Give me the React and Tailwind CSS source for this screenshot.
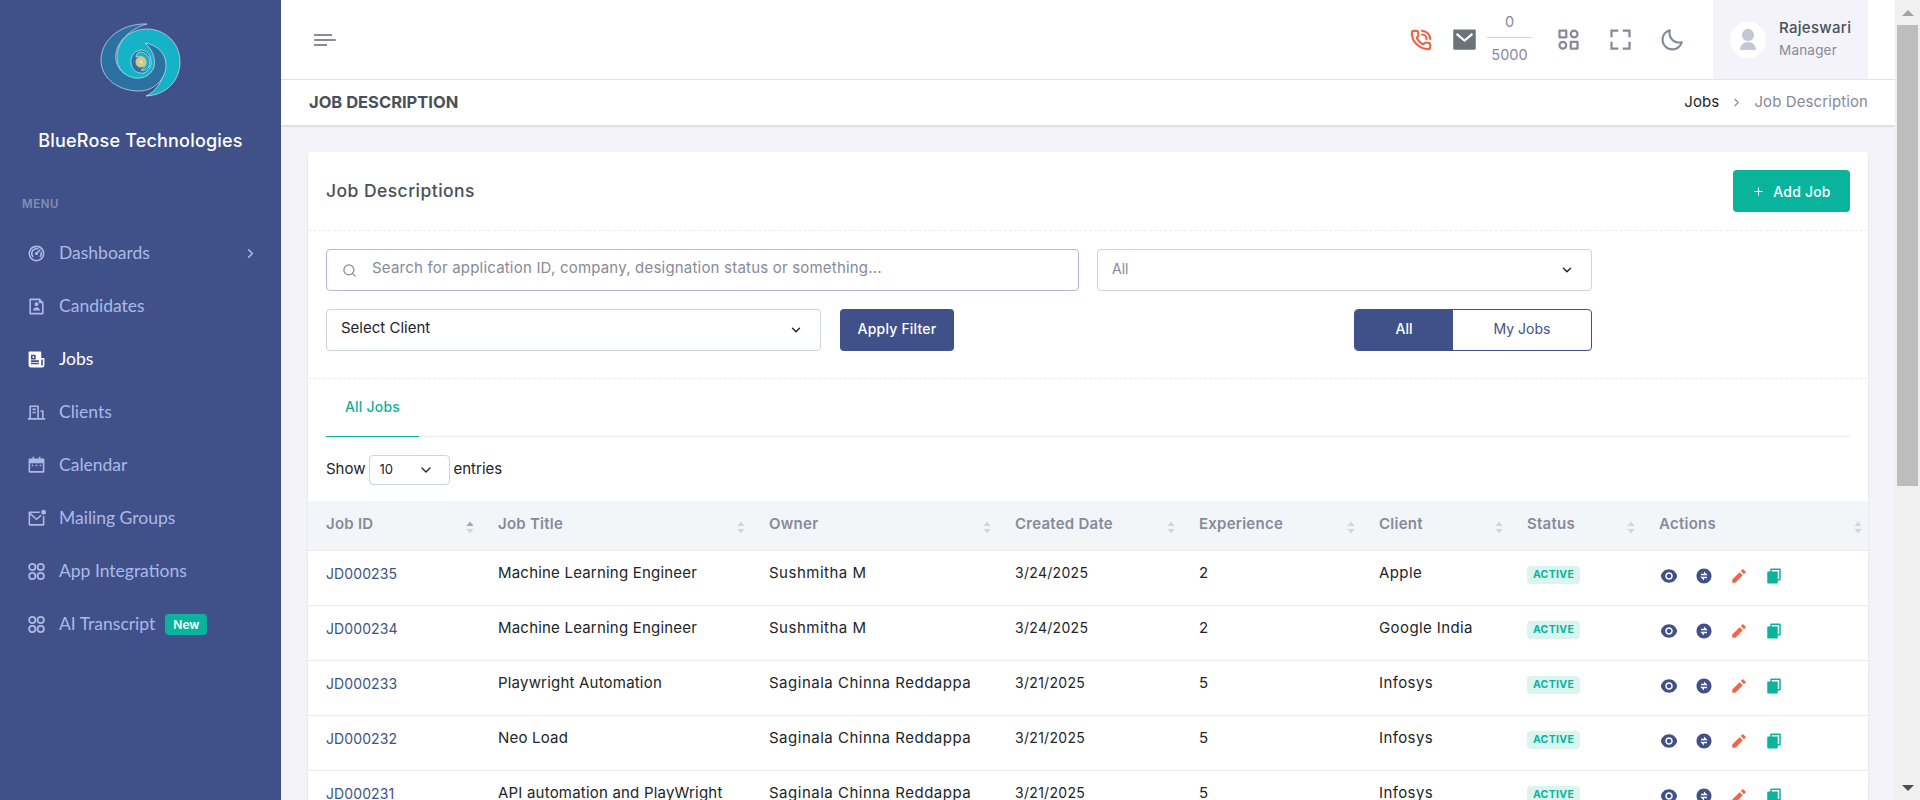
import React from "react";
import { ChevronDown, ChevronRight, Plus, Search, PhoneCall } from "lucide-react";
import {
  RiDashboard2Line,
  RiFileUserLine,
  RiNewspaperFill,
  RiBuildingLine,
  RiCalendar2Fill,
  RiMailUnreadLine,
  RiEyeFill,
  RiExchangeFill,
  RiPencilFill,
  RiFileCopyFill,
  RiMailFill,
  RiUserFill,
} from "react-icons/ri";
import { BiCategoryAlt, BiFullscreen, BiMoon } from "react-icons/bi";

const Circles = ({ className }) => (
  <svg viewBox="0 0 18 18" className={className} fill="none" stroke="currentColor" strokeWidth="1.7">
    <circle cx="5" cy="4.7" r="3" />
    <circle cx="13" cy="4.7" r="3" />
    <circle cx="5" cy="13.3" r="3" />
    <circle cx="13" cy="13.3" r="3" />
  </svg>
);

const navItems = [
  { label: "Dashboards", icon: RiDashboard2Line, chevron: true },
  { label: "Candidates", icon: RiFileUserLine },
  { label: "Jobs", icon: RiNewspaperFill, active: true },
  { label: "Clients", icon: RiBuildingLine },
  { label: "Calendar", icon: RiCalendar2Fill },
  { label: "Mailing Groups", icon: RiMailUnreadLine },
  { label: "App Integrations", icon: Circles },
  { label: "AI Transcript", icon: Circles, badge: "New" },
];

const columns = [
  { label: "Job ID", width: "w-[172px]", active: true },
  { label: "Job Title", width: "w-[271px]" },
  { label: "Owner", width: "w-[246px]" },
  { label: "Created Date", width: "w-[184px]" },
  { label: "Experience", width: "w-[180px]" },
  { label: "Client", width: "w-[148px]" },
  { label: "Status", width: "w-[132px]" },
  { label: "Actions", width: "w-[227px]" },
];

const rows = [
  ["JD000235", "Machine Learning Engineer", "Sushmitha M", "3/24/2025", "2", "Apple"],
  ["JD000234", "Machine Learning Engineer", "Sushmitha M", "3/24/2025", "2", "Google India"],
  ["JD000233", "Playwright Automation", "Saginala Chinna Reddappa", "3/21/2025", "5", "Infosys"],
  ["JD000232", "Neo Load", "Saginala Chinna Reddappa", "3/21/2025", "5", "Infosys"],
  ["JD000231", "API automation and PlayWright", "Saginala Chinna Reddappa", "3/21/2025", "5", "Infosys"],
];

const Logo = () => (
  <svg viewBox="18 12 84 76" className="w-[84px] h-[76px]">
    <g stroke="#d5e3ee" strokeWidth="0.7">
      {/* teal outer ring with its bottom tail */}
      <path
        d="M65 86 C86 85 99 70 99 52 C99 32 83 19 66 19 C48 19 36 32 36 47 C36 60 47 71 62 71 C70 71 78 66 84 58 C82 72 74 82 65 86 Z"
        fill="#14b3c8"
      />
      {/* dark band, from the top tip round the left and up the right */}
      <path
        d="M66 14 C40 13 20 30 20 50 C20 69 38 81 58 81 C73 81 85 69 85 55 C85 44 77 35 64 33 C71 39 75 48 73 57 C70 65 63 69 54 68 C42 66 33 56 35 43 C37 30 51 18 66 14 Z"
        fill="#2b71a2"
      />
      {/* inner swirl */}
      <path
        d="M61 40 C54 40 49 46 50 53 C51 60 56 64 63 63 C68 61 71 56 70 50 C69 44 66 41 61 40 Z"
        fill="#2b71a2"
      />
      <path
        d="M60 42 C67 43 71 50 68 57 C66 60 63 61 60 60 C65 58 66 52 63 48 C61 46 58 46 55 47 C55 44 57 42 60 42 Z"
        fill="#14b3c8"
      />
    </g>
    <circle cx="60" cy="52" r="5.5" fill="#d3ca88" />
    <circle cx="60" cy="52" r="1.6" fill="#e6e0b4" />
  </svg>
);

const SortIcon = ({ active }) => (
  <svg viewBox="0 0 8 13" className="w-[8px] h-[13px] mt-[8px] shrink-0">
    <path d="M4 0.5 L7.5 5 L0.5 5 Z" fill={active ? "#a3a6b4" : "#d3d5dc"} />
    <path d="M0.5 8 L7.5 8 L4 12.5 Z" fill="#d3d5dc" />
  </svg>
);

const Sidebar = () => (
  <aside className="w-[281px] shrink-0 h-full bg-[#405189] flex flex-col">
    {/* Logo */}
    <div className="flex flex-col items-center pt-[22px]">
      <Logo />
      <div className="mt-[29px] text-[18px] leading-[27px] font-medium text-white tracking-[0.2px]">
        BlueRose Technologies
      </div>
    </div>
    <div className="mt-[42px] pl-[22px] text-[11.5px] leading-4 font-semibold tracking-[0.6px] text-[#838fb9]">
      MENU
    </div>
    {/* Navigation */}
    <nav className="mt-[15px]">
      {navItems.map((item) => {
        const Icon = item.icon;
        return (
          <div
            key={item.label}
            className={
              "flex items-center h-[53px] pl-[27px] pr-[23px] font-['Lato'] text-[17.5px] " +
              (item.active ? "text-white" : "text-[#abb9e8]")
            }
          >
            <Icon className="w-[19px] h-[19px] shrink-0" />
            <span className="ml-[13px] pb-[1px]">{item.label}</span>
            {item.badge && (
              <span className="ml-[10px] h-[21px] px-[8px] flex items-center rounded-[4px] bg-[#0ab39c] text-white font-['Inter'] text-[12px] font-semibold">
                {item.badge}
              </span>
            )}
            {item.chevron && <ChevronRight className="ml-auto w-[15px] h-[15px]" strokeWidth={2.5} />}
          </div>
        );
      })}
    </nav>
  </aside>
);

const Header = () => (
  <header className="h-[80px] shrink-0 bg-white border-b border-[#e9ebec] flex items-center pl-[33px] pr-[27px]">
    <div className="flex flex-col gap-[3px] w-[23px]">
      <span className="h-[2px] w-[18px] bg-[#878a99]" />
      <span className="h-[2px] w-[22px] bg-[#878a99] rounded" />
      <span className="h-[2px] w-[13px] bg-[#878a99]" />
    </div>
    <div className="ml-auto flex items-center h-full">
      <PhoneCall className="w-[22px] h-[22px] text-[#f06548]" strokeWidth={2.4} />
      <RiMailFill className="ml-[19px] w-[27px] h-[27px] text-[#6b737b]" />
      <div className="ml-[9px] w-[45px] flex flex-col items-center text-[#878a99] text-[14.5px]">
        <span className="leading-[20px] h-[25px]">0</span>
        <span className="w-full h-px bg-[#ced4da]" />
        <span className="leading-[34px] h-[30px]">5000</span>
      </div>
      <BiCategoryAlt className="ml-[23px] w-[27px] h-[27px] text-[#878a99]" />
      <BiFullscreen className="ml-[25px] w-[27px] h-[27px] text-[#878a99]" />
      <BiMoon className="ml-[25px] w-[26px] h-[26px] text-[#878a99]" />
      <div className="ml-[28px] w-[155px] h-full bg-[#f3f3f9] flex items-center pl-[17px]">
        <div className="w-[36px] h-[36px] rounded-full bg-white flex items-center justify-center">
          <RiUserFill className="w-[24px] h-[24px] text-[#c5c6d6]" />
        </div>
        <div className="ml-[13px] pb-[2px]">
          <div className="text-[15px] tracking-[0.3px] leading-[21px] font-medium text-[#495057]">Rajeswari</div>
          <div className="text-[13.5px] tracking-[0.2px] leading-[20px] mt-[2px] text-[#878a99]">Manager</div>
        </div>
      </div>
    </div>
  </header>
);

const Breadcrumb = () => (
  <div className="h-[45px] shrink-0 bg-white shadow-[0_1px_3px_rgba(56,65,74,0.2)] flex items-center justify-between pl-[28px] pr-[27px]">
    <h1 className="text-[16.5px] font-bold text-[#495057]">JOB DESCRIPTION</h1>
    <div className="flex items-center text-[15px] tracking-[0.1px]">
      <span className="text-[#212529]">Jobs</span>
      <ChevronRight className="w-[13px] h-[13px] mx-[11px] text-[#878a99]" />
      <span className="text-[#878a99]">Job Description</span>
    </div>
  </div>
);

const Filters = () => (
  <div className="px-[18px] pt-[18px] pb-[27px] border-b border-dashed border-[#e9ebec]">
    <div className="w-[1266px] flex flex-col gap-[18px]">
      <div className="flex gap-[18px]">
        <div className="w-[753px] h-[42px] rounded-[4px] border border-[#b1b9d6] flex items-center pl-[15px]">
          <Search className="w-[15px] h-[15px] text-[#878a99]" />
          <span className="ml-[15px] pb-[3px] text-[15px] tracking-[0.2px] text-[#878a99]">
            Search for application ID, company, designation status or something...
          </span>
        </div>
        <div className="flex-1 h-[42px] rounded-[4px] border border-[#ced4da] flex items-center justify-between pl-[14px] pr-[17px]">
          <span className="pb-[3px] text-[14px] text-[#878a99]">All</span>
          <ChevronDown className="w-[14px] h-[14px] text-[#212529]" strokeWidth={2.5} />
        </div>
      </div>
      <div className="flex items-center">
        <div className="w-[495px] h-[42px] rounded-[4px] border border-[#ced4da] flex items-center justify-between pl-[14px] pr-[17px]">
          <span className="pb-[3px] text-[15px] text-[#212529]">Select Client</span>
          <ChevronDown className="w-[14px] h-[14px] text-[#212529]" strokeWidth={2.5} />
        </div>
        <button className="ml-[19px] w-[114px] h-[42px] pb-[3px] rounded-[4px] bg-[#405189] text-white text-[14px] tracking-[0.2px] font-medium">
          Apply Filter
        </button>
        <div className="ml-auto w-[238px] h-[42px] rounded-[4px] border border-[#405189] flex overflow-hidden">
          <button className="w-[98px] pb-[3px] bg-[#405189] text-white text-[14px] font-medium">All</button>
          <button className="flex-1 pb-[3px] text-[#405189] text-[14px]">My Jobs</button>
        </div>
      </div>
    </div>
  </div>
);

const JobsTable = () => (
  <table className="w-full table-fixed border-collapse text-[15px] tracking-[0.5px]">
    <thead>
      <tr className="h-[49px] bg-[#f3f6f9] border-b border-[#e9ebec]">
        {columns.map((col) => (
          <th
            key={col.label}
            className={col.width + " pl-[18px] pr-[6px] pb-[3px] text-left font-semibold tracking-[0.25px] text-[#878a99]"}
          >
            <div className="flex items-center justify-between">
              <span>{col.label}</span>
              <SortIcon active={col.active} />
            </div>
          </th>
        ))}
      </tr>
    </thead>
    <tbody>
      {rows.map((row) => (
        <tr key={row[0]} className="h-[55px] border-b border-[#e9ebec] text-[#212529]">
          <td className="pl-[18px] pb-[9px] text-[14px] tracking-[0.1px] text-[#405189]">{row[0]}</td>
          <td className="pl-[18px] pb-[8px] whitespace-nowrap tracking-[0.2px]">{row[1]}</td>
          <td className="pl-[18px] pb-[8px] whitespace-nowrap">{row[2]}</td>
          <td className="pl-[18px] pb-[10px] text-[14px] tracking-[0.3px]">{row[3]}</td>
          <td className="pl-[18px] pb-[8px]">{row[4]}</td>
          <td className="pl-[18px] pb-[8px] tracking-[0.4px]">{row[5]}</td>
          <td className="pl-[18px] pb-[8px]">
            <span className="inline-flex items-center justify-center w-[53px] h-[18px] rounded-[4px] bg-[#daf4f0] text-[#0ab39c] text-[10.5px] font-bold tracking-[0.3px]">
              ACTIVE
            </span>
          </td>
          <td className="pl-[19px] pb-[8px]">
            <div className="flex items-center gap-[17px] translate-y-[2px]">
              <RiEyeFill className="w-[18px] h-[18px] text-[#405189]" />
              <RiExchangeFill className="w-[18px] h-[18px] text-[#405189]" />
              <RiPencilFill className="w-[18px] h-[18px] text-[#f06548]" />
              <RiFileCopyFill className="w-[18px] h-[18px] text-[#0ab39c]" />
            </div>
          </td>
        </tr>
      ))}
    </tbody>
  </table>
);

const Scrollbar = () => (
  <div className="w-[25px] shrink-0 h-full bg-[#f0f0f0] flex flex-col items-center">
    <div className="h-[25px] w-full flex items-center justify-center">
      <span className="border-x-[6px] border-x-transparent border-b-[6px] border-b-[#a3a3a3]" />
    </div>
    <div className="h-[461px] w-[21px] bg-[#bdbdbd]" />
    <div className="mt-auto h-[25px] w-full flex items-center justify-center">
      <span className="border-x-[6px] border-x-transparent border-t-[6px] border-t-[#505050]" />
    </div>
  </div>
);

export default function App() {
  return (
    <div className="h-screen w-full overflow-hidden flex font-['Inter',sans-serif] bg-[#f3f3f9]">
      <Sidebar />
      <main className="flex-1 min-w-0 h-full flex flex-col">
        <Header />
        <Breadcrumb />
        <div className="px-[27px] pt-[27px]">
          <section className="bg-white rounded-[4px] shadow-[0_1px_2px_rgba(56,65,74,0.15)]">
            <div className="h-[79px] px-[18px] flex items-center justify-between border-b border-dashed border-[#e9ebec]">
              <h2 className="text-[17.5px] tracking-[0.45px] font-medium text-[#495057]">Job Descriptions</h2>
              <button className="w-[117px] h-[42px] rounded-[4px] bg-[#0ab39c] text-white text-[14px] tracking-[0.2px] font-medium flex items-center justify-center gap-[8px]">
                <Plus className="w-[13px] h-[13px]" />
                Add Job
              </button>
            </div>
            <Filters />
            <div className="mx-[18px] h-[58px] border-b border-[#e9ebec] flex">
              <div className="w-[93px] h-[58px] pb-[2px] border-b border-[#0ab39c] flex items-center justify-center text-[14px] tracking-[0.2px] font-medium text-[#0ab39c]">
                All Jobs
              </div>
            </div>
            <div className="px-[18px] pt-[18px] pb-[16px] flex items-center text-[15px] text-[#212529]">
              <span className="pb-[1px]">Show</span>
              <div className="ml-[3px] w-[81px] h-[30px] rounded-[4px] border border-[#ced4da] flex items-center justify-between pl-[10px] pr-[15px] text-[13px]">
                <span>10</span>
                <ChevronDown className="w-[16px] h-[16px]" strokeWidth={2} />
              </div>
              <span className="ml-[4px] pb-[1px]">entries</span>
            </div>
            <JobsTable />
          </section>
        </div>
      </main>
      <Scrollbar />
    </div>
  );
}
